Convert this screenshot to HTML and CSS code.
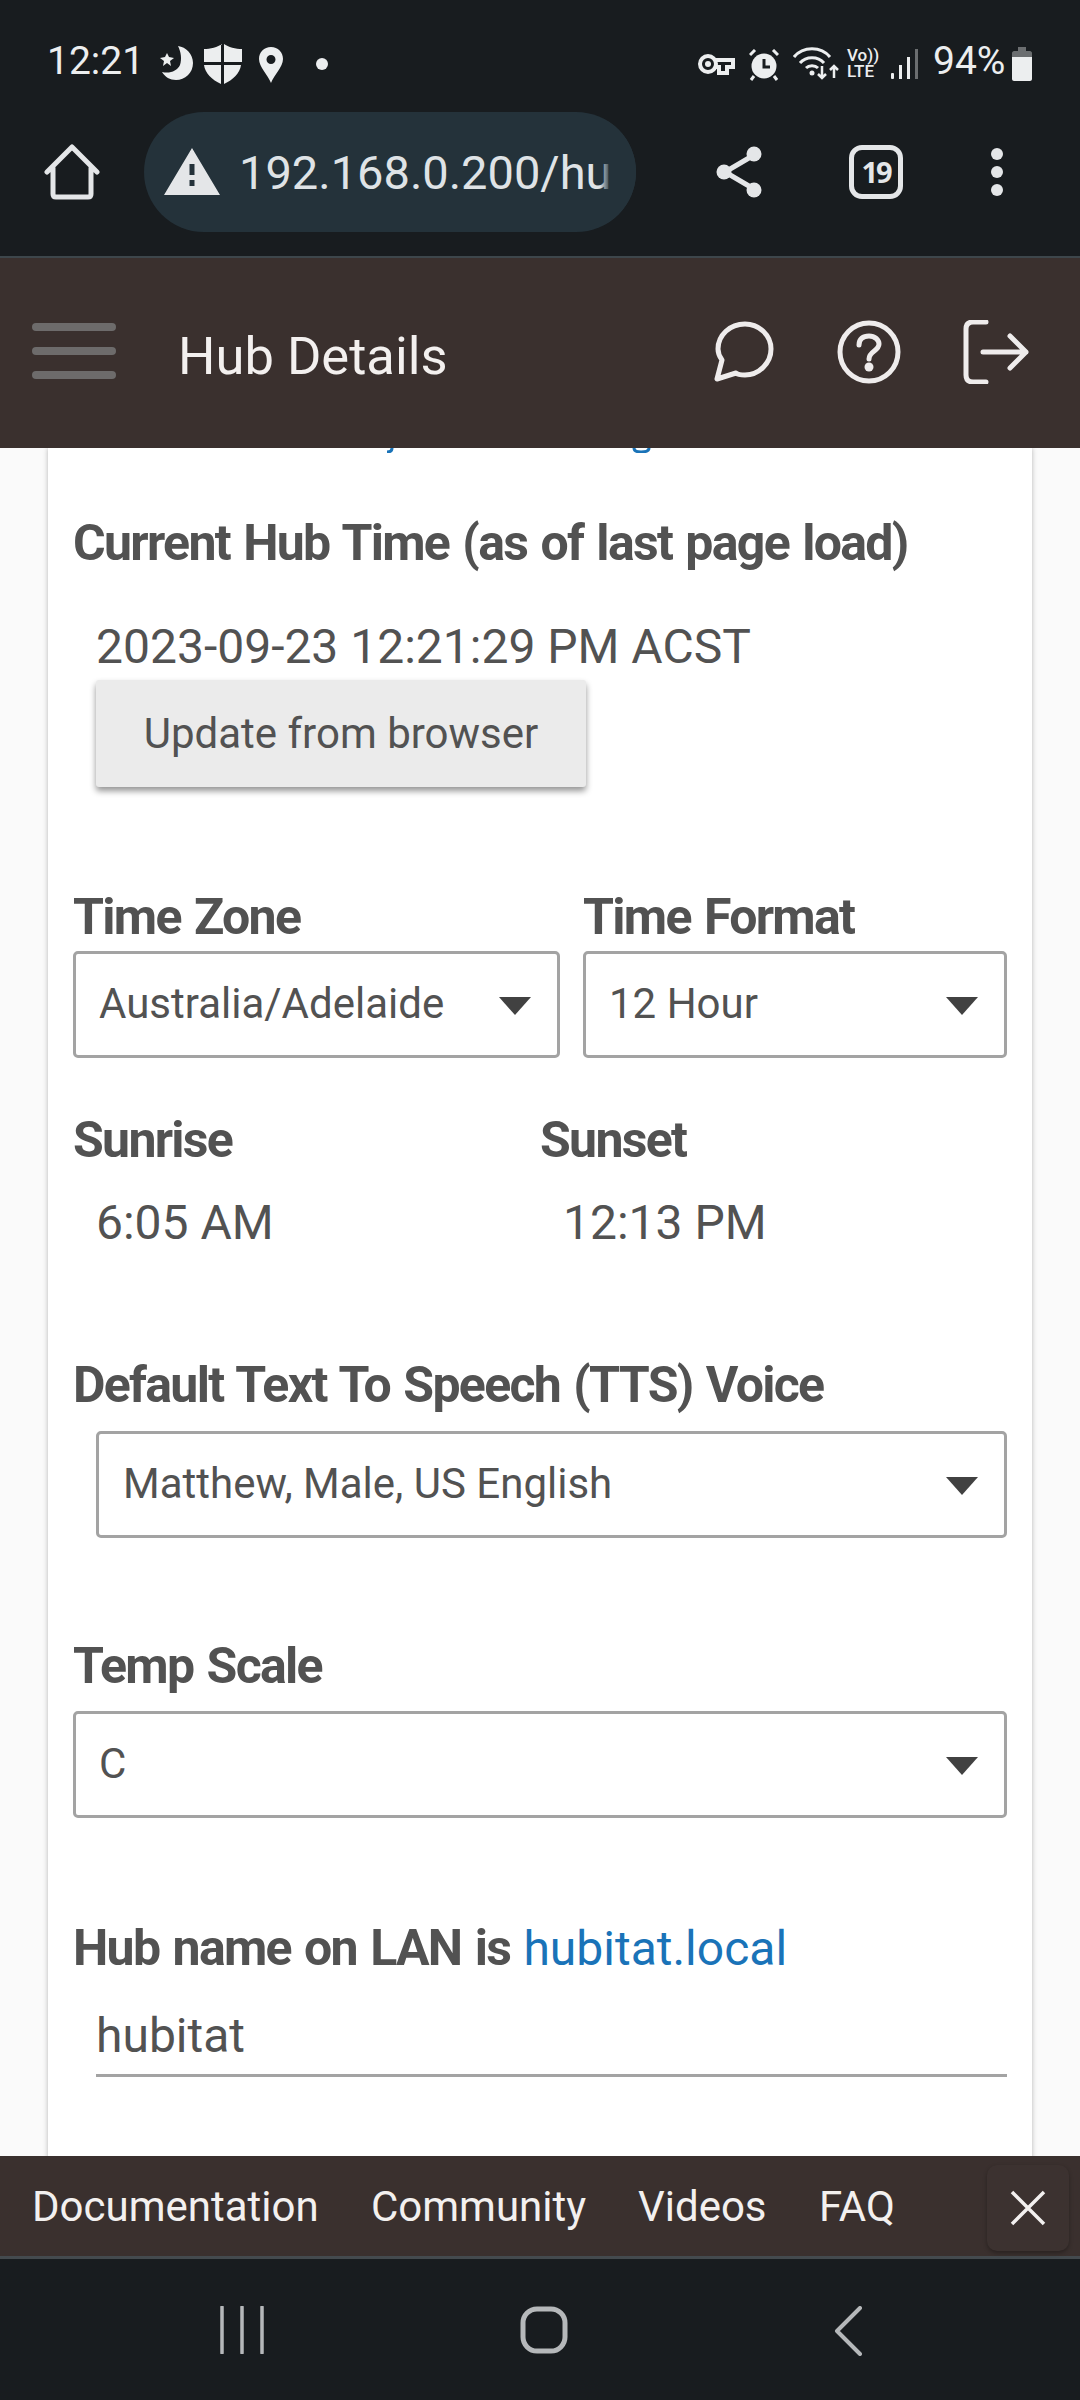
FILE: index.html
```html
<!DOCTYPE html>
<html lang="en">
<head>
<meta charset="utf-8">
<title>Hub Details</title>
<link rel="stylesheet" href="styles.css">
</head>
<body>
<div class="phone">
  <div class="chrome">
    <div class="status">
      <span class="clock">12:21</span>
      <svg class="ic moon" width="36" height="38" viewBox="0 0 36 38"><path fill="#eceeef" d="M19 2c8 1 15 8 15 17 0 10-8 17-17 17-6 0-11-3-14-8 8 2 15-1 18-7 2-6 1-13-2-19z"/><path fill="#eceeef" d="M8 9l2 4 5 1-4 3 1 5-4-3-4 3 1-5-4-3 5-1z"/></svg>
      <svg class="ic shield" width="40" height="40" viewBox="0 0 40 40"><path fill="#eceeef" d="M19 0C15 3 7 5 1 5v13h17V0zM21 0v18h18V5C33 5 25 3 21 0zM1 21c1 8 8 15 17 19V21zM21 21v19c9-4 16-11 17-19z"/></svg>
      <svg class="ic pin" width="24" height="36" viewBox="0 0 24 36"><path fill="#eceeef" fill-rule="evenodd" d="M12 0C5 0 0 5 0 12c0 8 9 16 12 24 3-8 12-16 12-24C24 5 19 0 12 0zm0 8a4.500 4.500 0 1 1 0 9 4.500 4.500 0 0 1 0-9z"/></svg>
      <span class="dot"></span>
      <span class="spacer"></span>
      <svg class="ic key" width="38" height="24" viewBox="0 0 38 24"><path fill="none" stroke="#eceeef" stroke-width="4" d="M11 3a8 8 0 1 1 0 16 8 8 0 0 1 0-16zM18 7h18v7h-6v6h-8v-6h-4"/><circle cx="11" cy="11" r="3" fill="#eceeef"/></svg>
      <svg class="ic alarm" width="30" height="32" viewBox="0 0 30 32"><circle cx="15" cy="17" r="12.500" fill="#eceeef"/><path d="M15 10v8h6" fill="none" stroke="#181c1f" stroke-width="3"/><path d="M6 1L1 6M24 1l5 5M5 27l-3 4M25 27l3 4" stroke="#eceeef" stroke-width="3"/></svg>
      <svg class="ic wifi" width="46" height="34" viewBox="0 0 46 34"><g fill="none" stroke="#eceeef" stroke-width="3"><path d="M1 11C10 0 28 0 37 11"/><path d="M7 17c6-7 18-7 24 0"/><path d="M13 22c3-3 9-3 12 0"/></g><circle cx="19" cy="27" r="2.500" fill="#eceeef"/><path d="M29 20v12M25 28l4 4 4-4M41 32V20M37 24l4-4 4 4" fill="none" stroke="#eceeef" stroke-width="2.500"/></svg>
      <span class="volte"><span>Vo))</span><span>LTE</span></span>
      <svg class="ic signal" width="28" height="32" viewBox="0 0 28 32"><rect x="0" y="25" width="3" height="6" rx="1" fill="#eceeef"/><rect x="8" y="17" width="3" height="14" fill="#eceeef"/><rect x="16" y="9" width="3" height="22" fill="#eceeef"/><rect x="24" y="1" width="3" height="30" fill="#6b6e70"/></svg>
      <span class="batt-text">94%</span>
      <svg class="ic batt" width="22" height="34" viewBox="0 0 22 34"><path fill="#6b6e70" d="M7 0h8v4h4c1 0 2 1 2 2v6H1V6c0-1 1-2 2-2h4z"/><path fill="#eceeef" d="M1 10h20v22c0 1-1 2-2 2H3c-1 0-2-1-2-2z"/></svg>
    </div>
    <div class="toolbar">
      <svg class="home" width="56" height="56" viewBox="0 0 56 56"><path fill="none" stroke="#e4e6e8" stroke-width="5" stroke-linejoin="round" stroke-linecap="round" d="M3 28L28 3l25 25M9 24v26c0 2 1 3 3 3h32c2 0 3-1 3-3V24"/></svg>
      <div class="pill">
        <svg class="warn" width="56" height="48" viewBox="0 0 56 48"><path fill-rule="evenodd" fill="#e4e6e8" d="M28 0l28 47H0zM25.500 16v11h5V16zM25.500 32v6h5v-6z"/></svg>
        <span class="url">192.168.0.200/hu</span>
        <span class="fade"></span>
      </div>
      <svg class="share" width="48" height="52" viewBox="0 0 48 52"><path d="M38 9L9 26l29 17" fill="none" stroke="#e4e6e8" stroke-width="5"/><circle cx="38" cy="8" r="7.500" fill="#e4e6e8"/><circle cx="8" cy="26" r="7.500" fill="#e4e6e8"/><circle cx="38" cy="44" r="7.500" fill="#e4e6e8"/></svg>
      <span class="tabs">19</span>
      <span class="more"><i></i><i></i><i></i></span>
    </div>
  </div>
  <header class="appbar">
    <span class="burger"><i></i><i></i><i></i></span>
    <h1 class="title">Hub Details</h1>
    <svg class="chat" width="62" height="62" viewBox="0 0 62 62"><path fill="none" stroke="#efecec" stroke-width="5" stroke-linejoin="round" d="M32 3c14 0 26 11 26 25S46 54 32 54c-4 0-7 0-9-2L4 58l5-19C6 35 5 32 5 28 5 14 17 3 32 3z"/></svg>
    <svg class="help" width="64" height="64" viewBox="0 0 64 64"><circle cx="32" cy="32" r="29" fill="none" stroke="#efecec" stroke-width="5"/><path d="M22 25c0-6 4-9 10-9s10 4 10 8c0 7-10 7-10 15" fill="none" stroke="#efecec" stroke-width="5" stroke-linecap="round"/><circle cx="32" cy="47" r="4.500" fill="#efecec"/></svg>
    <svg class="exit" width="66" height="64" viewBox="0 0 66 64"><path d="M23 2H10C5 2 3 5 3 9v46c0 4 2 7 7 7h13" fill="none" stroke="#efecec" stroke-width="5" stroke-linecap="round"/><path d="M20 32h43M47 16l16 16-16 16" fill="none" stroke="#efecec" stroke-width="5" stroke-linecap="round" stroke-linejoin="round"/></svg>
  </header>
  <main class="content">
    <div class="card">
      <svg class="clipped" width="984" height="5" viewBox="0 0 984 5"><path d="M344 0c0 3-2 4-5 4M586 0c0 3 3 4 7 4s8-1 8-4" fill="none" stroke="#1a73b8" stroke-width="3"/></svg>
      <h2 class="label first">Current Hub Time (as of last page load)</h2>
      <p class="value time">2023-09-23 12:21:29 PM ACST</p>
      <button class="btn">Update from browser</button>
      <div class="pair">
        <div class="col-zone">
          <h2 class="label">Time Zone</h2>
          <div class="select"><span>Australia/Adelaide</span><i class="caret"></i></div>
        </div>
        <div class="col-format">
          <h2 class="label">Time Format</h2>
          <div class="select"><span>12 Hour</span><i class="caret"></i></div>
        </div>
      </div>
      <div class="sun">
        <div>
          <h2 class="label">Sunrise</h2>
          <p class="value">6:05 AM</p>
        </div>
        <div>
          <h2 class="label">Sunset</h2>
          <p class="value">12:13 PM</p>
        </div>
      </div>
      <h2 class="label tts">Default Text To Speech (TTS) Voice</h2>
      <div class="select indented"><span>Matthew, Male, US English</span><i class="caret"></i></div>
      <h2 class="label temp">Temp Scale</h2>
      <div class="select"><span>C</span><i class="caret"></i></div>
      <h2 class="label lan">Hub name on LAN is <a class="link">hubitat.local</a></h2>
      <div class="input">hubitat</div>
    </div>
  </main>
  <footer class="links">
    <a>Documentation</a>
    <a>Community</a>
    <a>Videos</a>
    <a>FAQ</a>
    <span class="close"><svg width="36" height="36" viewBox="0 0 36 36"><path d="M2 2l32 32M34 2L2 34" stroke="#f3f0ef" stroke-width="3.500"/></svg></span>
  </footer>
  <nav class="navbar">
    <svg width="46" height="48" viewBox="0 0 46 48"><path d="M3 1v46M23 1v46M43 1v46" stroke="#b5b8ba" stroke-width="3.500" stroke-linecap="round"/></svg>
    <svg width="48" height="48" viewBox="0 0 48 48"><rect x="3" y="3" width="42" height="42" rx="14" fill="none" stroke="#b5b8ba" stroke-width="5"/></svg>
    <svg width="30" height="50" viewBox="0 0 30 50"><path d="M27 2L4 25l23 23" fill="none" stroke="#b5b8ba" stroke-width="4" stroke-linecap="round" stroke-linejoin="round"/></svg>
  </nav>
</div>
</body>
</html>
```

FILE: styles.css
```css
* { box-sizing: border-box; }
html, body { margin: 0; padding: 0; }
body { width: 1080px; height: 2400px; font-family: Roboto, "Liberation Sans", sans-serif; background: #181c1f; overflow: hidden; }
.phone { width: 1080px; height: 2400px; display: flex; flex-direction: column; }
.chrome { height: 258px; background: #181c1f; border-bottom: 2px solid #3d464b; flex: none; }
.status { height: 112px; padding: 44px 47px 0 47px; display: flex; align-items: flex-start; color: #eceeef; }
.clock { font-size: 39px; line-height: 36px; width: 112px; font-weight: 400; margin-top: -1px; }
.ic { display: block; flex: none; }
.moon { margin-top: 0; }
.shield { margin-left: 8px; }
.pin { margin: 3px 0 0 16px; }
.dot { width: 12px; height: 12px; border-radius: 50%; background: #eceeef; margin: 14px 0 0 33px; }
.spacer { flex: 1; }
.key { margin-top: 9px; }
.alarm { margin: 5px 0 0 14px; }
.wifi { margin: 2px 0 0 14px; }
.volte { display: flex; flex-direction: column; font-size: 17px; line-height: 16px; font-weight: 500; margin: 3px 0 0 8px; width: 31px; }
.signal { margin: 4px 0 0 13px; }
.batt-text { font-size: 39px; line-height: 36px; margin-left: 14px; font-weight: 400; width: 74px; margin-top: -1px; white-space: nowrap; }
.batt { margin: 3px 0 0 4px; }
.toolbar { height: 144px; display: flex; align-items: center; padding: 0 0 24px 44px; }
.home { flex: none; }
.pill { width: 492px; height: 120px; border-radius: 60px; background: #24323a; margin-left: 44px; display: flex; align-items: center; padding-left: 20px; position: relative; overflow: hidden; flex: none; }
.warn { flex: none; }
.url { font-size: 47px; color: #dfe3e6; margin-left: 19px; white-space: nowrap; }
.fade { position: absolute; right: 0; top: 0; width: 36px; height: 100%; background: linear-gradient(90deg, rgba(36,50,58,0), #24323a 30%); }
.share { margin-left: 80px; flex: none; }
.tabs { margin-left: 85px; width: 54px; height: 54px; border: 5px solid #e4e6e8; border-radius: 13px; color: #e4e6e8; font: 700 29px/43px "Open Sans", sans-serif; letter-spacing: -2px; text-align: center; flex: none; }
.more { margin-left: 88px; display: flex; flex-direction: column; gap: 6px; flex: none; }
.more i { display: block; width: 12px; height: 12px; border-radius: 50%; background: #e4e6e8; }
.appbar { height: 190px; flex: none; background: #3a302e; display: flex; align-items: flex-start; }
.burger { margin: 65px 0 0 32px; width: 84px; display: flex; flex-direction: column; gap: 16px; }
.burger i { display: block; height: 8px; border-radius: 4px; background: #6d6b6b; }
.title { font-size: 52.500px; line-height: 60px; font-weight: 400; color: #f3f0ef; margin: 68px 0 0 62px; white-space: nowrap; width: 535px; }
.chat { margin: 63px 0 0 0; flex: none; }
.help { margin: 62px 0 0 62px; flex: none; }
.exit { margin: 62px 0 0 62px; flex: none; }
.content { flex: 1; min-height: 0; background: #fafafa; padding: 0 48px; overflow: hidden; }
.card { background: #fff; box-shadow: 0 0 5px rgba(0,0,0,.28); padding: 0 25px; height: 1800px; }
.clipped { display: block; margin-left: -25px; }
.label { margin: 0; font-size: 50px; line-height: 56px; font-weight: 700; color: #525252; letter-spacing: -1.700px; word-spacing: 2.500px; white-space: nowrap; }
.first { margin-top: 62px; }
.value { margin: 0; font-size: 48px; line-height: 56px; color: #525252; padding-left: 23px; white-space: nowrap; }
.time { margin-top: 48px; }
.btn { display: block; margin: 5px 0 0 23px; width: 490px; height: 107px; background: #ebebeb; border: 0; border-radius: 3px; box-shadow: 0 4px 6px rgba(0,0,0,.42); font: 400 42px Roboto, sans-serif; color: #525252; padding: 0; }
.pair { display: flex; gap: 23px; margin-top: 102px; }
.col-zone { width: 487px; flex: none; }
.col-format { width: 424px; flex: none; }
.select { height: 107px; margin-top: 6px; border: 3px solid #a3a3a3; border-radius: 5px; background: #fff; display: flex; align-items: center; justify-content: space-between; padding: 0 26px 3px 23px; font-size: 42px; color: #525252; }
.caret { width: 0; height: 0; border-left: 16px solid transparent; border-right: 16px solid transparent; border-top: 18px solid #414141; margin-top: 6px; }
.sun { display: flex; margin-top: 54px; }
.sun > div { width: 467px; flex: none; }
.sun .value { margin-top: 27px; }
.tts { margin-top: 106px; }
.indented { margin-left: 23px; margin-top: 18px; padding-left: 24px; }
.temp { margin-top: 100px; }
.temp + .select { margin-top: 17px; }
.lan { margin-top: 102px; }
.link { color: #1a73b8; font-weight: 400; letter-spacing: 0; word-spacing: 0; font-size: 48px; }
.input { margin: 31px 0 0 23px; height: 69px; border-bottom: 3px solid #a3a3a3; font-size: 48px; line-height: 56px; color: #525252; }
.links { height: 103px; flex: none; background: #3a302e; border-bottom: 3px solid #444a4e; display: flex; align-items: center; position: relative; font-size: 42px; color: #f3f0ef; padding-left: 32px; }
.links a:nth-child(1) { width: 339px; }
.links a:nth-child(2) { width: 267px; }
.links a:nth-child(3) { width: 181px; }
.close { position: absolute; right: 11px; top: 9px; width: 82px; height: 86px; border-radius: 10px; background: #3c3230; box-shadow: 0 2px 4px rgba(0,0,0,.3); display: flex; align-items: center; justify-content: center; }
.navbar { height: 141px; flex: none; background: #181c1f; display: flex; align-items: flex-start; padding: 47px 0 0 219px; }
.navbar svg { display: block; }
.navbar svg:nth-child(2) { margin-left: 255px; }
.navbar svg:nth-child(3) { margin-left: 265px; }
```
